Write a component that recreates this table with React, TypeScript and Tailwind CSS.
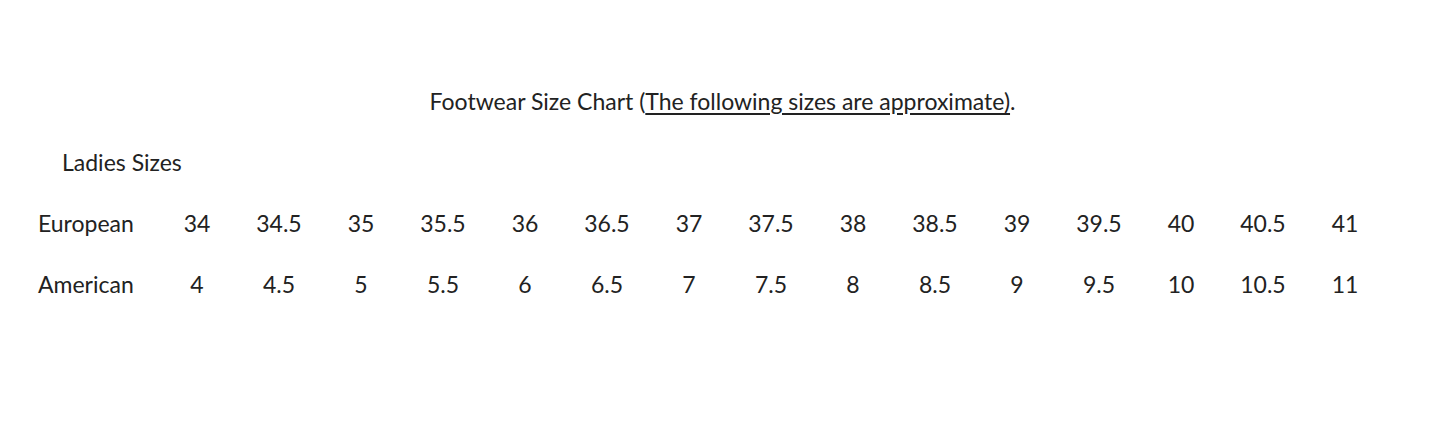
import React from "react";

const eu = ["34","34.5","35","35.5","36","36.5","37","37.5","38","38.5","39","39.5","40","40.5","41"];
const us = ["4","4.5","5","5.5","6","6.5","7","7.5","8","8.5","9","9.5","10","10.5","11"];

export default function App() {
  return (
    <div className="w-[1445px] h-[422px] bg-white text-[#222] font-['Lato','Liberation_Sans',sans-serif] text-[23px]">
      <div className="pt-[86px] text-center leading-[30px]">
        Footwear Size Chart (<span className="underline underline-offset-[3px]">The following sizes are approximate)</span>.
      </div>
      <div className="pl-[62px] mt-[31px] leading-[30px]">Ladies Sizes</div>
      <div className="ml-[30px] mt-[31px] grid grid-cols-[126px_repeat(15,82px)] gap-y-[31px] leading-[30px]">
        <div className="pl-[8px]">European</div>
        {eu.map((v) => (
          <div key={"e" + v} className="text-center">{v}</div>
        ))}
        <div className="pl-[8px]">American</div>
        {us.map((v) => (
          <div key={"a" + v} className="text-center">{v}</div>
        ))}
      </div>
    </div>
  );
}
